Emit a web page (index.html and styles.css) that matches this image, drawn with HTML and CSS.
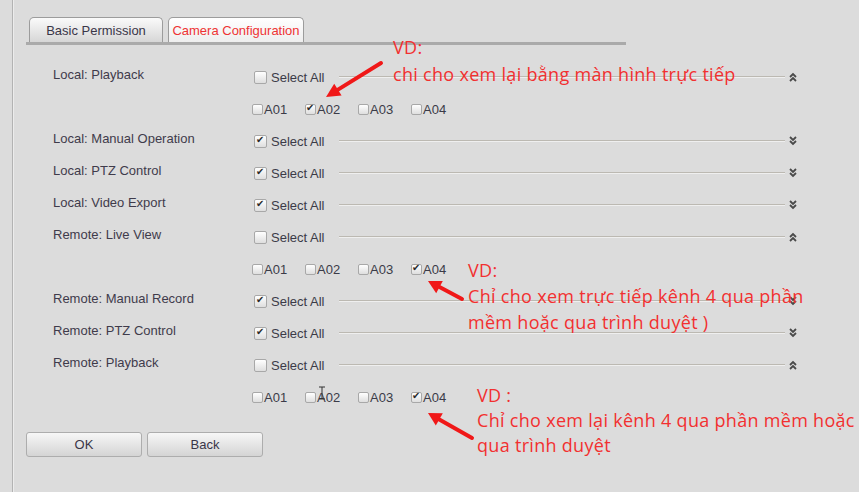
FILE: index.html
```html
<!DOCTYPE html>
<html lang="en">
<head>
  <meta charset="UTF-8">
  <title>Camera Configuration</title>
  <link rel="stylesheet" href="styles.css">
</head>
<body>

  <div class="page">
    <div class="panel">

      <div class="tabs">
        <div class="tab">Basic Permission</div>
        <div class="tab active">Camera Configuration</div>
      </div>

      <div class="rows">
        <div class="row">
          <div class="label">Local: Playback</div>
          <div class="ctrl">
            <span class="cb"></span><span class="all">Select All</span>
            <span class="rule"></span>
            <svg class="chev" viewBox="0 0 8 10"><polyline points="1,5 4,2 7,5"/><polyline points="1,9 4,6 7,9"/></svg>
          </div>
        </div>
        <div class="row sub">
          <div class="label"></div>
          <div class="chans">
            <span class="chan"><span class="cb sm"></span>A01</span>
            <span class="chan"><span class="cb sm on"></span>A02</span>
            <span class="chan"><span class="cb sm"></span>A03</span>
            <span class="chan"><span class="cb sm"></span>A04</span>
          </div>
        </div>

        <div class="row">
          <div class="label">Local: Manual Operation</div>
          <div class="ctrl">
            <span class="cb on"></span><span class="all">Select All</span>
            <span class="rule"></span>
            <svg class="chev" viewBox="0 0 8 10"><polyline points="1,1 4,4 7,1"/><polyline points="1,5 4,8 7,5"/></svg>
          </div>
        </div>
        <div class="row">
          <div class="label">Local: PTZ Control</div>
          <div class="ctrl">
            <span class="cb on"></span><span class="all">Select All</span>
            <span class="rule"></span>
            <svg class="chev" viewBox="0 0 8 10"><polyline points="1,1 4,4 7,1"/><polyline points="1,5 4,8 7,5"/></svg>
          </div>
        </div>
        <div class="row">
          <div class="label">Local: Video Export</div>
          <div class="ctrl">
            <span class="cb on"></span><span class="all">Select All</span>
            <span class="rule"></span>
            <svg class="chev" viewBox="0 0 8 10"><polyline points="1,1 4,4 7,1"/><polyline points="1,5 4,8 7,5"/></svg>
          </div>
        </div>

        <div class="row">
          <div class="label">Remote: Live View</div>
          <div class="ctrl">
            <span class="cb"></span><span class="all">Select All</span>
            <span class="rule"></span>
            <svg class="chev" viewBox="0 0 8 10"><polyline points="1,5 4,2 7,5"/><polyline points="1,9 4,6 7,9"/></svg>
          </div>
        </div>
        <div class="row sub">
          <div class="label"></div>
          <div class="chans">
            <span class="chan"><span class="cb sm"></span>A01</span>
            <span class="chan"><span class="cb sm"></span>A02</span>
            <span class="chan"><span class="cb sm"></span>A03</span>
            <span class="chan"><span class="cb sm on"></span>A04</span>
          </div>
        </div>

        <div class="row">
          <div class="label">Remote: Manual Record</div>
          <div class="ctrl">
            <span class="cb on"></span><span class="all">Select All</span>
            <span class="rule"></span>
            <svg class="chev" viewBox="0 0 8 10"><polyline points="1,1 4,4 7,1"/><polyline points="1,5 4,8 7,5"/></svg>
          </div>
        </div>
        <div class="row">
          <div class="label">Remote: PTZ Control</div>
          <div class="ctrl">
            <span class="cb on"></span><span class="all">Select All</span>
            <span class="rule"></span>
            <svg class="chev" viewBox="0 0 8 10"><polyline points="1,1 4,4 7,1"/><polyline points="1,5 4,8 7,5"/></svg>
          </div>
        </div>

        <div class="row">
          <div class="label">Remote: Playback</div>
          <div class="ctrl">
            <span class="cb"></span><span class="all">Select All</span>
            <span class="rule"></span>
            <svg class="chev" viewBox="0 0 8 10"><polyline points="1,5 4,2 7,5"/><polyline points="1,9 4,6 7,9"/></svg>
          </div>
        </div>
        <div class="row sub">
          <div class="label"></div>
          <div class="chans">
            <span class="chan"><span class="cb sm"></span>A01</span>
            <span class="chan"><span class="cb sm"></span>A02</span>
            <span class="chan"><span class="cb sm"></span>A03</span>
            <span class="chan"><span class="cb sm on"></span>A04</span>
          </div>
        </div>
      </div>

      <div class="buttons">
        <button class="btn">OK</button>
        <button class="btn">Back</button>
      </div>
    </div>
  </div>

  <!-- red notes drawn over the screenshot -->
  <div class="note n1">VD:<br>chi cho xem lại bằng màn hình trực tiếp</div>
  <div class="note n2">VD:<br>Chỉ cho xem trực tiếp kênh 4 qua phần<br>mềm hoặc qua trình duyệt )</div>
  <div class="note n3">VD :<br>Chỉ cho xem lại kênh 4 qua phần mềm hoặc<br>qua trình duyệt</div>

  <svg class="arrows" viewBox="0 0 859 492">
    <line x1="381" y1="63" x2="338" y2="89.6"/>
    <polygon points="326,97 341.6,95.6 334.2,83.7"/>
    <line x1="462" y1="299" x2="439.5" y2="287.1"/>
    <polygon points="428,281 436.2,293.3 442.8,280.9"/>
    <line x1="472" y1="438" x2="439.3" y2="419.4"/>
    <polygon points="428,413 435.8,425.5 442.8,413.3"/>
    <path class="ibeam" d="M319 387h6M322 387v12M319 399h6"/>
  </svg>

</body>
</html>
```

FILE: styles.css
```css
* {
  margin: 0;
  padding: 0;
  box-sizing: border-box;
}

body {
  background: #dcdcdc;
  color: #3f3b4b;
  font-family: 'Liberation Sans', Arial, sans-serif;
  font-size: 13px;
  height: 492px;
  overflow: hidden;
  position: relative;
}

.page {
  margin-left: 12px;
  height: 100%;
  border-left: 1px solid #b3b3b3;
  box-shadow: inset 1px 0 0 #ececec;
}

.panel {
  padding: 17px 0 0 13px;
  width: 800px;
}

/* tabs */
.tabs {
  display: flex;
  gap: 5px;
  padding-left: 3px;
  width: 600px;
  border-bottom: 3px solid #aaaaaa;
}

.tab {
  width: 134px;
  height: 25px;
  line-height: 25px;
  text-align: center;
  border: 1px solid #9c9c9c;
  border-bottom: none;
  border-radius: 5px 5px 0 0;
  background: linear-gradient(#fafafa, #d6d6d6);
  color: #3a3648;
}

.tab.active {
  width: 136px;
  background: linear-gradient(#ffffff, #eeeeee);
  color: #ee3333;
}

/* permission rows */
.rows {
  margin-top: 16px;
  padding-left: 27px;
}

.row {
  display: flex;
  align-items: center;
  height: 32px;
}

.label {
  width: 201px;
  flex: none;
  padding-bottom: 6px;
}

.ctrl {
  display: flex;
  align-items: center;
  flex: 1;
}

.cb {
  display: inline-block;
  width: 13px;
  height: 13px;
  border: 1px solid #a8a8a8;
  border-radius: 2px;
  background: linear-gradient(#ffffff, #dedede);
  position: relative;
  flex: none;
}

.cb.sm {
  width: 11px;
  height: 11px;
  margin-right: 1px;
}

.cb.on::after {
  content: '\2714';
  position: absolute;
  left: 1px;
  top: -2px;
  font-family: 'DejaVu Sans', sans-serif;
  font-size: 10px;
  color: #2a2a2a;
}

.cb.sm.on::after {
  left: 0;
  top: -3px;
}

.all {
  margin-left: 4px;
  color: #3b3b48;
}

.rule {
  flex: 1;
  height: 2px;
  margin: 0 0 1px 15px;
  border-top: 1px solid #bcb9b2;
  border-bottom: 1px solid #efefef;
}

.chev {
  width: 8px;
  height: 10px;
  margin: 0 16px 0 4px;
  fill: none;
  stroke: #4a4a4a;
  stroke-width: 1.8;
}

.chans {
  display: flex;
  margin-left: -2px;
}

.chan {
  display: flex;
  align-items: center;
  width: 53px;
  color: #3b3b48;
}

/* buttons */
.buttons {
  display: flex;
  gap: 5px;
  margin-top: 19px;
}

.btn {
  width: 116px;
  height: 25px;
  border: 1px solid #adadad;
  border-radius: 3px;
  background: linear-gradient(#f7f7f7, #d4d4d4);
  font-family: 'Liberation Sans', Arial, sans-serif;
  font-size: 13px;
  color: #3a3648;
}

/* annotations */
.note {
  position: absolute;
  color: #f23030;
  font-family: 'Open Sans', 'Noto Sans', sans-serif;
  font-size: 18px;
  letter-spacing: 0.3px;
  white-space: nowrap;
}

.n1 { left: 393px; top: 34px; line-height: 27px; }
.n2 { left: 468px; top: 257px; line-height: 26px; }
.n3 { left: 477px; top: 383px; line-height: 25px; }

.arrows {
  position: absolute;
  left: 0;
  top: 0;
  width: 859px;
  height: 492px;
  pointer-events: none;
}

.arrows line {
  stroke: #f01818;
  stroke-width: 4;
  stroke-linecap: round;
}

.arrows polygon {
  fill: #f01818;
}

.arrows .ibeam {
  fill: none;
  stroke: #333;
  stroke-width: 1;
}
```
